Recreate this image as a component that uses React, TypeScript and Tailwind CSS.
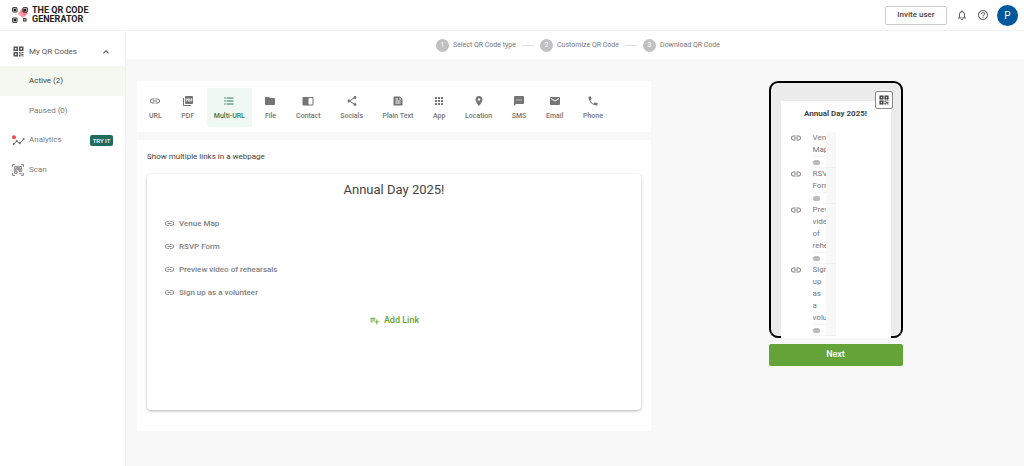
import type { ReactNode } from "react";
import clsx from "clsx";
import {
  MdApps,
  MdEmail,
  MdExpandLess,
  MdFeed,
  MdFolder,
  MdFormatListBulleted,
  MdHelpOutline,
  MdLink,
  MdNotificationsNone,
  MdPhone,
  MdPictureAsPdf,
  MdPlace,
  MdPlaylistAdd,
  MdShare,
  MdSms,
} from "react-icons/md";

const links = ["Venue Map", "RSVP Form", "Preview video of rehearsals", "Sign up as a volunteer"];

const steps = ["Select QR Code type", "Customize QR Code", "Download QR Code"];

const types: { label: string; icon: ReactNode }[] = [
  { label: "URL", icon: <MdLink /> },
  { label: "PDF", icon: <MdPictureAsPdf /> },
  { label: "Multi-URL", icon: <MdFormatListBulleted /> },
  { label: "File", icon: <MdFolder /> },
  { label: "Contact", icon: <ContactIcon /> },
  { label: "Socials", icon: <MdShare /> },
  { label: "Plain Text", icon: <MdFeed /> },
  { label: "App", icon: <MdApps /> },
  { label: "Location", icon: <MdPlace /> },
  { label: "SMS", icon: <MdSms /> },
  { label: "Email", icon: <MdEmail /> },
  { label: "Phone", icon: <MdPhone /> },
];

function ContactIcon() {
  return (
    <svg viewBox="0 0 24 24" width="1em" height="1em" fill="currentColor">
      <path d="M21 4H3a2 2 0 0 0-2 2v13a2 2 0 0 0 2 2h8l1 1 1-1h8a2 2 0 0 0 2-2V6a2 2 0 0 0-2-2zm0 15h-8V7l1-1h7v13z" />
    </svg>
  );
}

function QrIcon({ className }: { className?: string }) {
  return (
    <svg viewBox="0 0 22 22" className={className} fill="currentColor">
      <path
        fillRule="evenodd"
        d="M1 1h9v9H1zM4 4v3h3V4zM12 1h9v9h-9zM15 4v3h3V4zM1 12h9v9H1zM4 15v3h3v-3z"
      />
      <path d="M12 12h3v3h-3zM17 12h4v2h-4zM15 15h2v2h-2zM12 17h3v4h-3zM17 16h4v2h-2v3h-2zM20 19h1v2h-1z" />
    </svg>
  );
}

function LogoMark() {
  return (
    <svg viewBox="0 0 48 48" className="h-4 w-4 shrink-0">
      <defs>
        <linearGradient id="beam" x1="1" y1="0" x2="0" y2="1">
          <stop offset="0" stopColor="#ee3345" />
          <stop offset="1" stopColor="#ee3345" stopOpacity="0.15" />
        </linearGradient>
      </defs>
      <path d="M31 4L47 19L33 34L17 22z" fill="url(#beam)" />
      <g fill="none" stroke="#222" strokeWidth="3">
        <rect x="2" y="2" width="13" height="13" rx="1" />
        <rect x="33" y="2" width="13" height="13" rx="1" />
        <rect x="2" y="33" width="13" height="13" rx="1" />
        <rect x="35" y="35" width="7" height="7" />
      </g>
      <path d="M5 5h7v7H5zM36 5h7v7h-7zM5 36h7v7H5z" fill="#222" />
    </svg>
  );
}

function AnalyticsIcon() {
  return (
    <svg viewBox="0 0 39 33" className="h-[11px] w-[13px] shrink-0">
      <path d="M5 27L14 18L23 25L35 12" fill="none" stroke="#666" strokeWidth="3" />
      <g fill="#666">
        <circle cx="5" cy="27" r="3" />
        <circle cx="14" cy="18" r="3" />
        <circle cx="23" cy="25" r="3" />
        <circle cx="35" cy="12" r="3" />
      </g>
      <circle cx="6" cy="7" r="6" fill="#e94b4b" />
    </svg>
  );
}

function ScanIcon() {
  return (
    <svg viewBox="0 0 36 36" className="h-3 w-3 shrink-0" fill="none" stroke="#777" strokeWidth="3">
      <path d="M2 9V2h7M27 2h7v7M34 27v7h-7M9 34H2v-7" />
      <path d="M8 8h7v7H8zM21 8h7v7h-7zM8 21h7v7H8zM20 21h4v4M28 20v4M22 29h7M18 6v12M17 18h14M5 18h7" />
    </svg>
  );
}

function Header() {
  return (
    <header className="flex h-[31px] items-center justify-between border-b border-[#f1f1f1] bg-white pr-1.5 pl-3">
      <a href="#" className="flex items-center gap-1">
        <LogoMark />
        <span className="text-[9px] leading-[9px] font-bold text-[#222]">
          THE QR CODE
          <br />
          GENERATOR
        </span>
      </a>
      <div className="flex items-center">
        <button className="h-[19px] w-[62px] rounded-xs border border-[#ccc] text-[8px] font-medium text-[#444]">
          Invite user
        </button>
        <button aria-label="Notifications" className="ml-[9px] text-[12px] text-[#666]">
          <MdNotificationsNone />
        </button>
        <button aria-label="Help" className="ml-[9px] text-[12px] text-[#666]">
          <MdHelpOutline />
        </button>
        <button className="ml-2 h-[21px] w-[21px] rounded-full bg-[#01579b] text-[10px] text-white">P</button>
      </div>
    </header>
  );
}

function Sidebar() {
  return (
    <nav className="flex w-[126px] shrink-0 flex-col border-r border-[#f1f1f1] bg-white pt-[5px] text-[8px] text-[#808080]">
      <button className="flex h-[30px] items-center pt-px pr-[13px] pl-[13px] text-[#555]">
        <QrIcon className="h-[11px] w-[11px]" />
        <span className="ml-[5px] flex-1 text-left">My QR Codes</span>
        <MdExpandLess className="text-[12px]" />
      </button>
      <a href="#" className="flex h-[30px] items-center bg-[#f4f8f1] pl-[29px] text-[#444]">
        Active (2)
      </a>
      <a href="#" className="flex h-[29px] items-center pl-[29px]">
        Paused (0)
      </a>
      <a href="#" className="flex h-[30px] items-center pr-3 pl-3">
        <AnalyticsIcon />
        <span className="ml-1 flex-1">Analytics</span>
        <span className="flex h-[11px] w-[23px] items-center justify-center rounded-xs bg-[#226b5c] text-[6px] font-medium text-white">
          TRY IT
        </span>
      </a>
      <a href="#" className="flex h-[29px] items-center gap-[5px] pl-3">
        <ScanIcon />
        Scan
      </a>
    </nav>
  );
}

function Stepper() {
  return (
    <ol className="flex h-7 items-center justify-center bg-white pl-1.5 text-[7px] text-[#777]">
      {steps.map((step, i) => (
        <li key={step} className="flex items-center">
          {i > 0 && <span className="mx-1.5 h-px w-3 bg-[#ddd]" />}
          <span className="mr-1 flex h-[13px] w-[13px] items-center justify-center rounded-full bg-[#c0c0c0] text-white">
            {i + 1}
          </span>
          {step}
        </li>
      ))}
    </ol>
  );
}

function TypeTabs() {
  return (
    <div className="flex justify-between bg-white pt-[7px] pr-[41px] pb-[5px] pl-[5px]">
      {types.map(({ label, icon }) => (
        <button
          key={label}
          className={clsx(
            "flex h-[39px] flex-col items-center justify-center gap-1 rounded-xs px-[7px] text-[7px] leading-[10px] font-medium whitespace-nowrap",
            label === "Multi-URL" ? "bg-[#f0f8f4] text-[#2f7d5b]" : "text-[#757575]",
          )}
        >
          <span className="text-[12px]">{icon}</span>
          {label}
        </button>
      ))}
    </div>
  );
}

function LinkEditor() {
  return (
    <section className="mt-2 bg-white px-[10px] pt-[10px] pb-[21px]">
      <h2 className="text-[8px] leading-[14px] text-[#444]">Show multiple links in a webpage</h2>
      <div className="mt-[10px] flex min-h-[236px] flex-col rounded-sm bg-white pt-1.5 shadow-[0_1px_3px_rgba(0,0,0,0.3)]">
        <h1 className="text-center text-[13px] leading-5 text-[#444]">Annual Day 2025!</h1>
        <ul className="mt-[12px] pl-[17px] text-[8px] font-medium text-[#808080]">
          {links.map((link) => (
            <li key={link} className="flex h-[23px] items-center gap-1">
              <MdLink className="text-[11px]" />
              {link}
            </li>
          ))}
        </ul>
        <button className="mt-2 flex items-center gap-1 self-center text-[9px] leading-4 font-medium text-[#64a233]">
          <MdPlaylistAdd className="text-[11px]" />
          Add Link
        </button>
      </div>
    </section>
  );
}

function PhonePreview() {
  return (
    <div className="relative rounded-[9px] bg-black p-0.5 pb-0">
      <div className="rounded-[7px] bg-[#ececec] px-[10px] pt-[18px] shadow-[inset_0_-2px_0_#000]">
        <div className="bg-white pt-[6px] pb-0.5">
          <h3 className="text-center text-[8px] leading-[14px] font-bold text-[#444]">Annual Day 2025!</h3>
          <ul className="mt-[11px] text-[8px] leading-3 text-[#777]">
            {links.map((link) => (
              <li key={link} className="flex pl-[9px]">
                <MdLink className="h-3 w-3 shrink-0" />
                {/* narrow column, long words get clipped */}
                <div className="ml-[11px] w-[13px]">
                  <p className="overflow-hidden">{link}</p>
                  <div className="flex h-3 items-center border-y border-[#f5f5f5]">
                    <span className="h-[5px] w-[7px] rounded-full bg-[#bbb]" />
                  </div>
                </div>
                <div className="w-[10px] border-b border-[#eee] bg-[#f8f8f8]" />
              </li>
            ))}
          </ul>
        </div>
      </div>
      <button
        aria-label="Show QR code"
        className="absolute top-[10px] right-[10px] flex h-[18px] w-[18px] items-center justify-center rounded-xs border border-[#888] bg-white text-[#333]"
      >
        <QrIcon className="h-[10px] w-[10px]" />
      </button>
    </div>
  );
}

export default function App() {
  return (
    <div className="flex min-h-screen flex-col bg-[#f8f8f8] font-[Roboto,'Liberation_Sans',sans-serif]">
      <Header />
      <div className="flex flex-1">
        <Sidebar />
        <main className="flex-1">
          <Stepper />
          <div className="flex items-start pt-[22px] pl-[11px]">
            <div className="flex-[514]">
              <TypeTabs />
              <LinkEditor />
            </div>
            <div className="flex flex-[373] justify-center">
              <div className="mr-1 w-[134px]">
                <PhonePreview />
                <button className="mt-1.5 h-[22px] w-full rounded-xs bg-[#64a338] text-[9px] font-medium text-white">
                  Next
                </button>
              </div>
            </div>
          </div>
        </main>
      </div>
    </div>
  );
}
